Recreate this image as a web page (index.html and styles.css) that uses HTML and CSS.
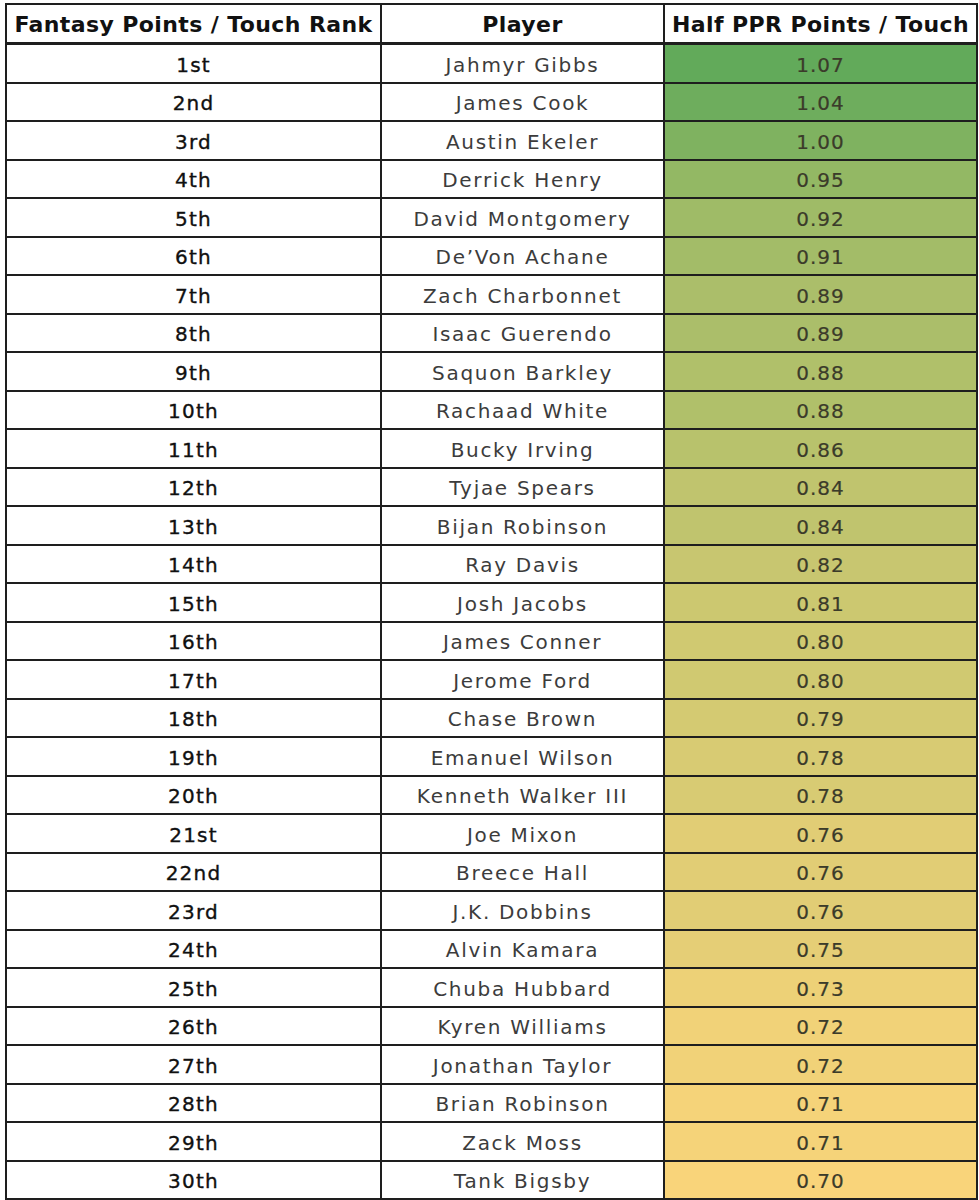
FILE: index.html
```html
<!DOCTYPE html>
<html>
<head>
<meta charset="utf-8">
<link rel="stylesheet" href="styles.css">
</head>
<body>
<table class="rank-table">
<colgroup><col class="c-rank"><col class="c-player"><col class="c-val"></colgroup>
<thead>
<tr><th>Fantasy Points / Touch Rank</th><th>Player</th><th>Half PPR Points / Touch</th></tr>
</thead>
<tbody>
<tr><td class="rank">1st</td><td class="player">Jahmyr Gibbs</td><td class="val" style="background:rgb(98,170,90)">1.07</td></tr>
<tr><td class="rank">2nd</td><td class="player">James Cook</td><td class="val" style="background:rgb(110,173,93)">1.04</td></tr>
<tr><td class="rank">3rd</td><td class="player">Austin Ekeler</td><td class="val" style="background:rgb(127,178,96)">1.00</td></tr>
<tr><td class="rank">4th</td><td class="player">Derrick Henry</td><td class="val" style="background:rgb(147,184,100)">0.95</td></tr>
<tr><td class="rank">5th</td><td class="player">David Montgomery</td><td class="val" style="background:rgb(159,187,103)">0.92</td></tr>
<tr><td class="rank">6th</td><td class="player">De’Von Achane</td><td class="val" style="background:rgb(163,188,104)">0.91</td></tr>
<tr><td class="rank">7th</td><td class="player">Zach Charbonnet</td><td class="val" style="background:rgb(171,190,106)">0.89</td></tr>
<tr><td class="rank">8th</td><td class="player">Isaac Guerendo</td><td class="val" style="background:rgb(171,190,106)">0.89</td></tr>
<tr><td class="rank">9th</td><td class="player">Saquon Barkley</td><td class="val" style="background:rgb(176,192,106)">0.88</td></tr>
<tr><td class="rank">10th</td><td class="player">Rachaad White</td><td class="val" style="background:rgb(176,192,106)">0.88</td></tr>
<tr><td class="rank">11th</td><td class="player">Bucky Irving</td><td class="val" style="background:rgb(184,194,108)">0.86</td></tr>
<tr><td class="rank">12th</td><td class="player">Tyjae Spears</td><td class="val" style="background:rgb(192,196,110)">0.84</td></tr>
<tr><td class="rank">13th</td><td class="player">Bijan Robinson</td><td class="val" style="background:rgb(192,196,110)">0.84</td></tr>
<tr><td class="rank">14th</td><td class="player">Ray Davis</td><td class="val" style="background:rgb(200,198,112)">0.82</td></tr>
<tr><td class="rank">15th</td><td class="player">Josh Jacobs</td><td class="val" style="background:rgb(204,200,112)">0.81</td></tr>
<tr><td class="rank">16th</td><td class="player">James Conner</td><td class="val" style="background:rgb(208,201,113)">0.80</td></tr>
<tr><td class="rank">17th</td><td class="player">Jerome Ford</td><td class="val" style="background:rgb(208,201,113)">0.80</td></tr>
<tr><td class="rank">18th</td><td class="player">Chase Brown</td><td class="val" style="background:rgb(212,202,114)">0.79</td></tr>
<tr><td class="rank">19th</td><td class="player">Emanuel Wilson</td><td class="val" style="background:rgb(216,203,115)">0.78</td></tr>
<tr><td class="rank">20th</td><td class="player">Kenneth Walker III</td><td class="val" style="background:rgb(216,203,115)">0.78</td></tr>
<tr><td class="rank">21st</td><td class="player">Joe Mixon</td><td class="val" style="background:rgb(225,205,117)">0.76</td></tr>
<tr><td class="rank">22nd</td><td class="player">Breece Hall</td><td class="val" style="background:rgb(225,205,117)">0.76</td></tr>
<tr><td class="rank">23rd</td><td class="player">J.K. Dobbins</td><td class="val" style="background:rgb(225,205,117)">0.76</td></tr>
<tr><td class="rank">24th</td><td class="player">Alvin Kamara</td><td class="val" style="background:rgb(229,206,118)">0.75</td></tr>
<tr><td class="rank">25th</td><td class="player">Chuba Hubbard</td><td class="val" style="background:rgb(237,209,119)">0.73</td></tr>
<tr><td class="rank">26th</td><td class="player">Kyren Williams</td><td class="val" style="background:rgb(241,210,120)">0.72</td></tr>
<tr><td class="rank">27th</td><td class="player">Jonathan Taylor</td><td class="val" style="background:rgb(241,210,120)">0.72</td></tr>
<tr><td class="rank">28th</td><td class="player">Brian Robinson</td><td class="val" style="background:rgb(245,211,121)">0.71</td></tr>
<tr><td class="rank">29th</td><td class="player">Zack Moss</td><td class="val" style="background:rgb(245,211,121)">0.71</td></tr>
<tr><td class="rank">30th</td><td class="player">Tank Bigsby</td><td class="val" style="background:rgb(249,212,122)">0.70</td></tr>
</tbody>
</table>
</body>
</html>
```
FILE: styles.css
```css
html, body {
  margin: 0;
  padding: 0;
  background: #ffffff;
}
body {
  padding: 3px 3px 0 5px;
  font-family: "DejaVu Sans", "Noto Sans", sans-serif;
}
.rank-table {
  border-collapse: collapse;
  width: 971px;
  table-layout: fixed;
}
.c-rank { width: 375px; }
.c-player { width: 283px; }
.c-val { width: 313px; }
.rank-table th,
.rank-table td {
  border: 2px solid #1e1e1e;
  text-align: center;
  line-height: 1;
}
.rank-table th {
  height: 35px;
  padding: 2px 0 0;
  font-size: 22px;
  font-weight: 700;
  color: #111111;
  border-bottom-width: 3px;
  letter-spacing: 0.4px;
}
.rank-table td {
  height: 33.5px;
  padding: 3px 0 0;
  font-size: 20px;
}
.rank {
  color: #101010;
  font-weight: 400;
  letter-spacing: 1.2px;
  -webkit-text-stroke: 0.35px #101010;
}
.player {
  color: #3c3c3c;
  font-weight: 400;
  letter-spacing: 1.7px;
}
.val {
  color: #3b3b2a;
  font-weight: 400;
  letter-spacing: 1px;
  -webkit-text-stroke: 0.2px #3b3b2a;
}
```
